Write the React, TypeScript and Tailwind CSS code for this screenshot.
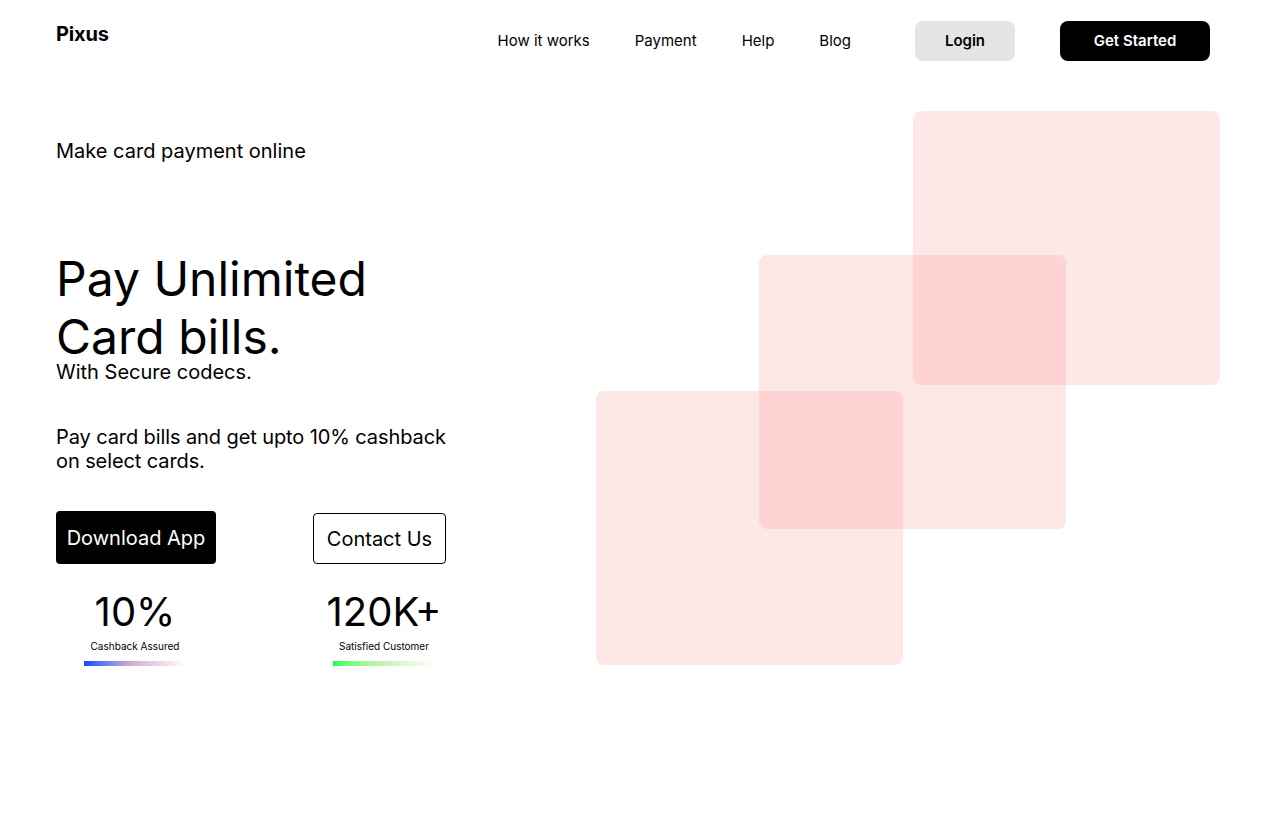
import React from "react";

export default function App() {
  return (
    <div className="min-h-[832px] w-full bg-white text-black font-['Inter',sans-serif]">
      <header className="flex items-start justify-between pl-14 pr-[70px] pt-5">
        <div className="text-[20px] leading-7 font-bold tracking-[-0.2px]">Pixus</div>
        <div className="mt-[1px] flex h-10 items-center">
          <nav className="flex items-center gap-[45px] text-[15px]">
            <a>How it works</a>
            <a>Payment</a>
            <a>Help</a>
            <a>Blog</a>
          </nav>
          <button className="ml-16 h-10 w-[100px] rounded-lg bg-[#e6e5e6] text-[15px] font-semibold">Login</button>
          <button className="ml-[45px] h-10 w-[150px] rounded-lg bg-black text-[15px] font-semibold text-white">Get Started</button>
        </div>
      </header>

      <main className="flex pl-14">
        <section className="w-[440px] shrink-0">
          <p className="mt-[76px] text-[20px] leading-7">Make card payment online</p>
          <h1 className="mt-[85px] text-[48px] leading-[58px] font-normal">
            Pay Unlimited
            <br />
            Card bills.
          </h1>
          <p className="text-[20px] leading-[12px]">With Secure codecs.</p>
          <p className="mt-[47px] text-[20px] leading-6 tracking-[-0.1px]">
            Pay card bills and get upto 10% cashback
            <br />
            on select cards.
          </p>
          <div className="mt-[38px] flex items-end">
            <button className="h-[53px] w-[160px] rounded bg-black text-[20px] text-white">Download App</button>
            <button className="ml-[97px] h-[51px] w-[133px] rounded border border-black text-[20px]">Contact Us</button>
          </div>
          <div className="mt-6 flex gap-[91px]">
            <div className="flex w-[158px] flex-col items-center">
              <div className="text-[40px] leading-[48px]">10%</div>
              <div className="mt-1 text-[10px] leading-[13px]">Cashback Assured</div>
              <div className="mt-2 h-[5px] w-[102px] bg-gradient-to-r from-[#0a46ff] via-[#d9b3cf] to-white" />
            </div>
            <div className="flex w-[158px] flex-col items-center">
              <div className="text-[40px] leading-[48px]">120K+</div>
              <div className="mt-1 text-[10px] leading-[13px]">Satisfied Customer</div>
              <div className="mt-2 h-[5px] w-[102px] bg-gradient-to-r from-[#00ff52] via-[#c7f2b4] to-white" />
            </div>
          </div>
        </section>

        <section className="relative ml-[100px] mt-[50px] h-[554px] w-[624px] shrink-0">
          <div className="absolute left-[317px] top-0 h-[274px] w-[307px] rounded-lg bg-[rgba(248,113,113,0.17)]" />
          <div className="absolute left-[163px] top-[144px] h-[274px] w-[307px] rounded-lg bg-[rgba(248,113,113,0.17)]" />
          <div className="absolute left-0 top-[280px] h-[274px] w-[307px] rounded-lg bg-[rgba(248,113,113,0.17)]" />
        </section>
      </main>
    </div>
  );
}
